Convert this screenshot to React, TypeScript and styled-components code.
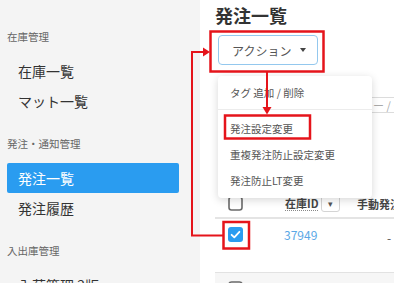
import React from 'react'
import styled, { createGlobalStyle } from 'styled-components'

const colors = {
  sidebar: '#f4f4f4',
  text: '#333333',
  sub: '#666666',
  blue: '#2a9cf0',
  link: '#5aa8e6',
  line: '#e4e4e4',
  red: '#e5141b',
}

const GlobalStyle = createGlobalStyle`
  html, body {
    margin: 0;
    padding: 0;
    background: #ffffff;
    font-family: "Noto Sans CJK JP", "Noto Sans", "Liberation Sans", sans-serif;
  }
`

const sections = [
  { label: '在庫管理', items: ['在庫一覧', 'マット一覧'] },
  { label: '発注・通知管理', items: ['発注一覧', '発注履歴'] },
  { label: '入出庫管理', items: ['入荷管理 2版'] },
]

const menuItems = ['タグ 追加 / 削除', '発注設定変更', '重複発注防止設定変更', '発注防止LT変更']

const CheckBox = ({ checked }: { checked?: boolean }) => (
  <svg width="15" height="15" viewBox="0 0 15 15">
    {checked ? (
      <>
        <rect x="0" y="0" width="15" height="15" rx="3" fill={colors.blue} />
        <path d="M3.6 7.8 L6.3 10.4 L11.4 4.8" stroke="#fff" strokeWidth="1.8" fill="none" strokeLinecap="round" strokeLinejoin="round" />
      </>
    ) : (
      <rect x="1" y="1" width="13" height="13" rx="2.5" fill="#fff" stroke="#6a6a6a" strokeWidth="1.6" />
    )}
  </svg>
)

export default function App() {
  return (
    <>
      <GlobalStyle />
      <Frame>
        <Sidebar>
          {sections.map((s) => (
            <Section key={s.label}>
              <SectionLabel>{s.label}</SectionLabel>
              {s.items.map((item) => (
                <NavItem key={item} $active={item === '発注一覧'}>{item}</NavItem>
              ))}
            </Section>
          ))}
        </Sidebar>

        <Main>
          <Title>発注一覧</Title>
          <ActionArea>
            <ActionButton>
              アクション
              <Caret />
            </ActionButton>
            <Menu>
              {menuItems.map((m, i) => (
                <MenuItem key={m} $divided={i === 0}>{m}</MenuItem>
              ))}
            </Menu>
          </ActionArea>

          <Toolbar>
            <SearchBox>カテゴリー / タグ</SearchBox>
          </Toolbar>

          <Table>
            <HeaderRow>
              <Cell $pad={13}><CheckBox /></Cell>
              <Cell $pad={8}>
                <HeadLabel>在庫ID</HeadLabel>
                <SortButton>▾</SortButton>
              </Cell>
              <Cell $pad={0}><HeadText>手動発注数</HeadText></Cell>
            </HeaderRow>
            <Row>
              <Cell $pad={13}><CheckBox checked /></Cell>
              <Cell $pad={7}><IdLink>37949</IdLink></Cell>
              <Cell $pad={30}><Dash>-</Dash></Cell>
            </Row>
            <Row $shaded>
              <Cell $pad={13}><CheckBox /></Cell>
              <Cell $pad={7}><IdLink>37950</IdLink></Cell>
              <Cell $pad={30}><Dash>-</Dash></Cell>
            </Row>
          </Table>
        </Main>

        <Annotations width="394" height="283" viewBox="0 0 394 283">
          <g fill="none" stroke={colors.red} strokeWidth="2.5">
            <rect x="210.5" y="31.5" width="113" height="40" />
            <rect x="225" y="115.5" width="85" height="23" />
            <rect x="223.5" y="222" width="25.5" height="26.5" />
            <polyline points="223,235.5 192,235.5 192,52 204,52" strokeWidth="2" />
            <line x1="267" y1="72" x2="267" y2="108" strokeWidth="2" />
          </g>
          <g fill={colors.red}>
            <polygon points="203,47.5 210,52 203,56.5" />
            <polygon points="262.5,107 271.5,107 267,114.5" />
          </g>
        </Annotations>
      </Frame>
    </>
  )
}

const Frame = styled.div`
  position: relative;
  display: flex;
  width: 394px;
  height: 283px;
  overflow: hidden;
`

const Sidebar = styled.nav`
  width: 200px;
  flex-shrink: 0;
  background: ${colors.sidebar};
  padding-top: 30px;
  box-sizing: border-box;
  display: flex;
  flex-direction: column;
  gap: 21px;
`

const Section = styled.div`
  display: flex;
  flex-direction: column;
`

const SectionLabel = styled.div`
  font-size: 10.5px;
  line-height: 14px;
  color: ${colors.sub};
  padding-left: 7px;
  margin-bottom: 12px;
`

const NavItem = styled.div<{ $active?: boolean }>`
  height: 30px;
  margin-left: 7px;
  width: 172px;
  padding-left: 11px;
  box-sizing: border-box;
  display: flex;
  align-items: center;
  font-size: 14px;
  color: ${(p) => (p.$active ? '#fff' : colors.text)};
  background: ${(p) => (p.$active ? colors.blue : 'transparent')};
  border-radius: 2px;
`

const Main = styled.main`
  flex: 1;
  min-width: 0;
  padding: 3px 0 0 15px;
  display: flex;
  flex-direction: column;
  background: #fff;
`

const Title = styled.h1`
  margin: 0 0 8px;
  font-size: 18px;
  line-height: 24px;
  font-weight: 700;
  color: ${colors.text};
`

const ActionArea = styled.div`
  position: relative;
  align-self: flex-start;
  margin-left: 3px;
  z-index: 2;
`

const ActionButton = styled.button`
  width: 100px;
  height: 30px;
  box-sizing: border-box;
  display: flex;
  align-items: center;
  gap: 9px;
  padding: 0 0 0 13px;
  background: #fff;
  border: 1.5px solid #94c8ee;
  border-radius: 4px;
  font-family: inherit;
  font-size: 12px;
  color: #555;
`

const Caret = styled.span`
  width: 0;
  height: 0;
  border-left: 3.5px solid transparent;
  border-right: 3.5px solid transparent;
  border-top: 4.5px solid #444;
`

const Menu = styled.div`
  position: absolute;
  top: 41px;
  left: 0;
  width: 154px;
  padding: 4px 0 5px;
  background: #fff;
  border-radius: 4px;
  box-shadow: 0 2px 9px rgba(0, 0, 0, 0.16);
`

const MenuItem = styled.div<{ $divided?: boolean }>`
  height: ${(p) => (p.$divided ? '24px' : '26px')};
  display: flex;
  align-items: center;
  padding-left: 12px;
  font-size: 10.5px;
  color: #555;
  ${(p) => p.$divided && `
    margin-bottom: 11px;
    position: relative;
    &::after {
      content: '';
      position: absolute;
      left: 0;
      right: 0;
      bottom: -6px;
      border-bottom: 1px solid #ececec;
    }
  `}
`

const Toolbar = styled.div`
  display: flex;
  margin-top: 32px;
  padding-left: 106px;
`

const SearchBox = styled.div`
  flex-shrink: 0;
  width: 120px;
  height: 16px;
  box-sizing: border-box;
  border-top: 1px solid #dcdcdc;
  border-bottom: 1px solid #dcdcdc;
  padding-left: 8px;
  font-size: 11px;
  line-height: 14px;
  color: #aaa;
  white-space: nowrap;
`

const Table = styled.div`
  margin-top: 77px;
  display: flex;
  flex-direction: column;
`

const HeaderRow = styled.div`
  display: grid;
  grid-template-columns: 62px 80px 80px;
  height: 29px;
  align-items: center;
  border-bottom: 2px solid ${colors.line};
  box-sizing: border-box;
`

const Row = styled.div<{ $shaded?: boolean }>`
  display: grid;
  grid-template-columns: 62px 80px 80px;
  height: 54px;
  box-sizing: border-box;
  align-items: start;
  padding-top: 8px;
  background: ${(p) => (p.$shaded ? '#f6f6f6' : '#fff')};
  border-bottom: 1px solid #e2e2e2;
`

const Cell = styled.div<{ $pad: number }>`
  display: flex;
  align-items: center;
  padding-left: ${(p) => p.$pad}px;
  white-space: nowrap;
  height: 15px;
`

const HeadLabel = styled.span`
  font-size: 11px;
  font-weight: 700;
  color: #444;
  border-bottom: 1px dotted #888;
  line-height: 14px;
`

const SortButton = styled.span`
  margin-left: 3px;
  width: 19px;
  height: 17px;
  box-sizing: border-box;
  border: 1px solid #d4d4d4;
  border-radius: 3px;
  display: flex;
  align-items: center;
  justify-content: center;
  font-size: 9px;
  color: #555;
`

const HeadText = styled.span`
  font-size: 11px;
  font-weight: 700;
  color: #444;
`

const IdLink = styled.span`
  font-size: 12px;
  color: ${colors.link};
  line-height: 15px;
`

const Dash = styled.span`
  font-size: 12px;
  color: #555;
  line-height: 15px;
  padding-top: 6px;
`

const Annotations = styled.svg`
  position: absolute;
  left: 0;
  top: 0;
  pointer-events: none;
  z-index: 5;
`
